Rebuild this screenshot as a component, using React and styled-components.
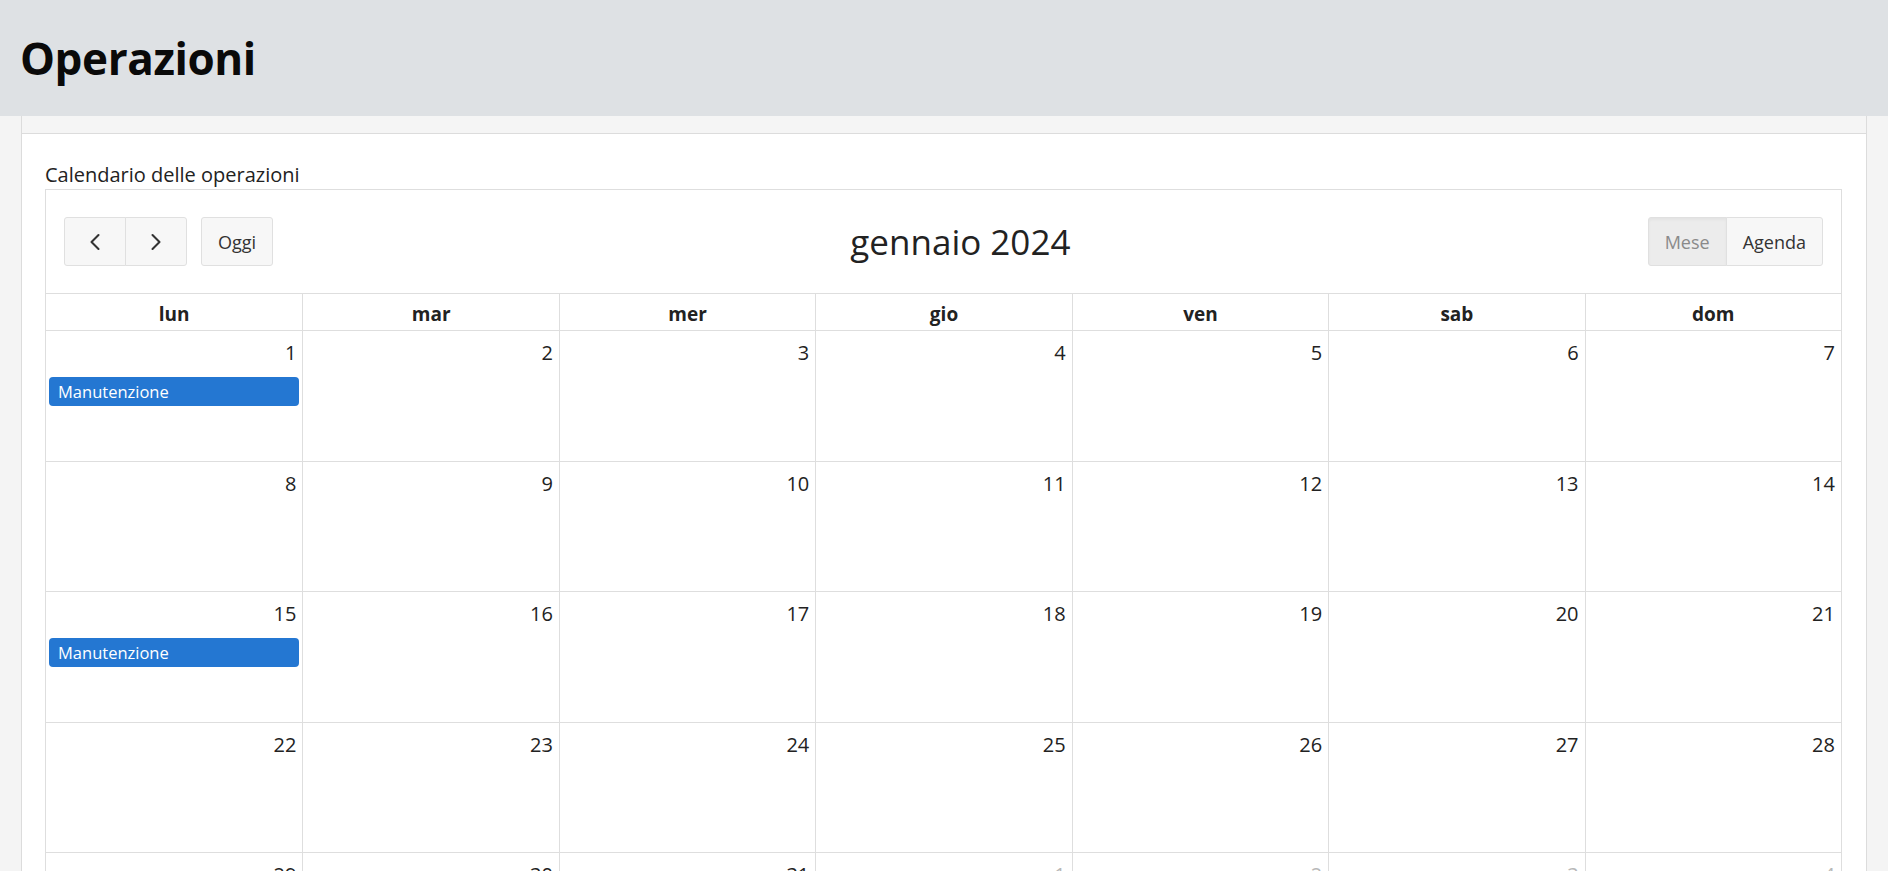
import React from "react";
import styled, { createGlobalStyle } from "styled-components";
import { ChevronLeft, ChevronRight } from "lucide-react";

const GlobalStyle = createGlobalStyle`
  html, body {
    margin: 0;
    padding: 0;
    background: #f4f4f4;
    font-family: "Open Sans", "Noto Sans", sans-serif;
    color: #222;
  }
  * {
    box-sizing: border-box;
  }
`;

const WEEKDAYS = ["lun", "mar", "mer", "gio", "ven", "sab", "dom"];

const buildWeeks = () => {
  const days = [];
  for (let d = 1; d <= 31; d++) days.push({ n: d, current: true });
  for (let d = 1; d <= 4; d++) days.push({ n: d, current: false });
  const weeks = [];
  for (let i = 0; i < days.length; i += 7) weeks.push(days.slice(i, i + 7));
  return weeks;
};

const EVENTS = { 1: "Manutenzione", 15: "Manutenzione" };

const App = () => {
  const weeks = buildWeeks();

  return (
    <>
      <GlobalStyle />
      <PageHeader>
        <h1>Operazioni</h1>
      </PageHeader>
      <Main>
        <Card>
          <CardHeading />
          <CardBody>
            <Label>Calendario delle operazioni</Label>
            <Calendar>
              <Toolbar>
                <Group>
                  <ButtonGroup>
                    <ToolButton aria-label="precedente">
                      <ChevronLeft size={28} strokeWidth={1.8} />
                    </ToolButton>
                    <ToolButton aria-label="successivo">
                      <ChevronRight size={28} strokeWidth={1.8} />
                    </ToolButton>
                  </ButtonGroup>
                  <ToolButton $wide>Oggi</ToolButton>
                </Group>
                <MonthTitle>gennaio 2024</MonthTitle>
                <ButtonGroup>
                  <ToolButton $active $wide>
                    Mese
                  </ToolButton>
                  <ToolButton $wide>Agenda</ToolButton>
                </ButtonGroup>
              </Toolbar>

              <MonthGrid>
                {WEEKDAYS.map((w) => (
                  <WeekdayCell key={w}>{w}</WeekdayCell>
                ))}
                {weeks.map((week, wi) =>
                  week.map((day, di) => (
                    <DayCell key={`${wi}-${di}`}>
                      <DayNumber $muted={!day.current}>{day.n}</DayNumber>
                      {day.current && EVENTS[day.n] && (
                        <EventChip>{EVENTS[day.n]}</EventChip>
                      )}
                    </DayCell>
                  ))
                )}
              </MonthGrid>
            </Calendar>
          </CardBody>
        </Card>
      </Main>
    </>
  );
};

export default App;

const PageHeader = styled.header`
  height: 116px;
  background: #dee1e4;
  display: flex;
  align-items: center;
  padding: 0 20px;

  h1 {
    margin: 0;
    font-size: 44px;
    font-weight: 700;
    color: #0a0a0a;
    letter-spacing: -0.4px;
  }
`;

const Main = styled.main`
  padding: 0 21px;
`;

const Card = styled.section`
  background: #fff;
  border: 1px solid #dcdcdc;
  border-top: none;
  min-height: 800px;
`;

const CardHeading = styled.div`
  height: 18px;
  background: #f5f5f5;
  border-bottom: 1px solid #dcdcdc;
`;

const CardBody = styled.div`
  padding: 27px 24px 24px 23px;
`;

const Label = styled.div`
  font-size: 20px;
  line-height: 28px;
  color: #222;
`;

const Calendar = styled.div`
  border: 1px solid #dedede;
  border-bottom: none;
`;

const Toolbar = styled.div`
  display: flex;
  justify-content: space-between;
  align-items: center;
  padding: 27px 18px 27px;
`;

const Group = styled.div`
  display: flex;
  gap: 14px;
`;

const ButtonGroup = styled.div`
  display: flex;

  & > button + button {
    margin-left: -1px;
  }
  & > button:not(:first-child) {
    border-top-left-radius: 0;
    border-bottom-left-radius: 0;
  }
  & > button:not(:last-child) {
    border-top-right-radius: 0;
    border-bottom-right-radius: 0;
  }
`;

const ToolButton = styled.button`
  height: 49px;
  min-width: 62px;
  padding: 0 ${(p) => (p.$wide ? "16px" : "0")};
  display: flex;
  align-items: center;
  justify-content: center;
  background: ${(p) => (p.$active ? "#ececec" : "#f7f7f7")};
  border: 1px solid #e0e0e0;
  border-radius: 3px;
  font-family: inherit;
  font-size: 18px;
  color: ${(p) => (p.$active ? "#8a8a8a" : "#333")};
  box-shadow: ${(p) => (p.$active ? "inset 0 2px 3px rgba(0,0,0,0.04)" : "none")};
  cursor: pointer;
`;

const MonthTitle = styled.h2`
  margin: 0;
  font-size: 35px;
  font-weight: 400;
  color: #222;
  line-height: 1.2;
`;

const MonthGrid = styled.div`
  display: grid;
  grid-template-columns: repeat(7, 1fr);
  grid-template-rows: 37px repeat(5, 130.5px);
  border-top: 1px solid #dedede;
`;

const WeekdayCell = styled.div`
  display: flex;
  align-items: center;
  justify-content: center;
  padding-top: 3px;
  font-size: 19px;
  font-weight: 700;
  color: #222;
  border-bottom: 1px solid #dedede;
  & + & {
    border-left: 1px solid #dedede;
  }
  &:nth-child(7n + 1) {
    border-left: none;
  }
`;

const DayCell = styled.div`
  display: flex;
  flex-direction: column;
  border-bottom: 1px solid #dedede;
  border-left: 1px solid #dedede;
  &:nth-child(7n + 1) {
    border-left: none;
  }
`;

const DayNumber = styled.div`
  text-align: right;
  padding: 7px 6px 0;
  font-size: 20px;
  line-height: 30px;
  color: ${(p) => (p.$muted ? "#b8b8b8" : "#222")};
`;

const EventChip = styled.div`
  margin: 9px 3px 0 3px;
  height: 29px;
  line-height: 29px;
  padding: 0 9px;
  background: #2477d2;
  border-radius: 4px;
  color: #fff;
  font-size: 16.5px;
  white-space: nowrap;
  overflow: hidden;
`;
